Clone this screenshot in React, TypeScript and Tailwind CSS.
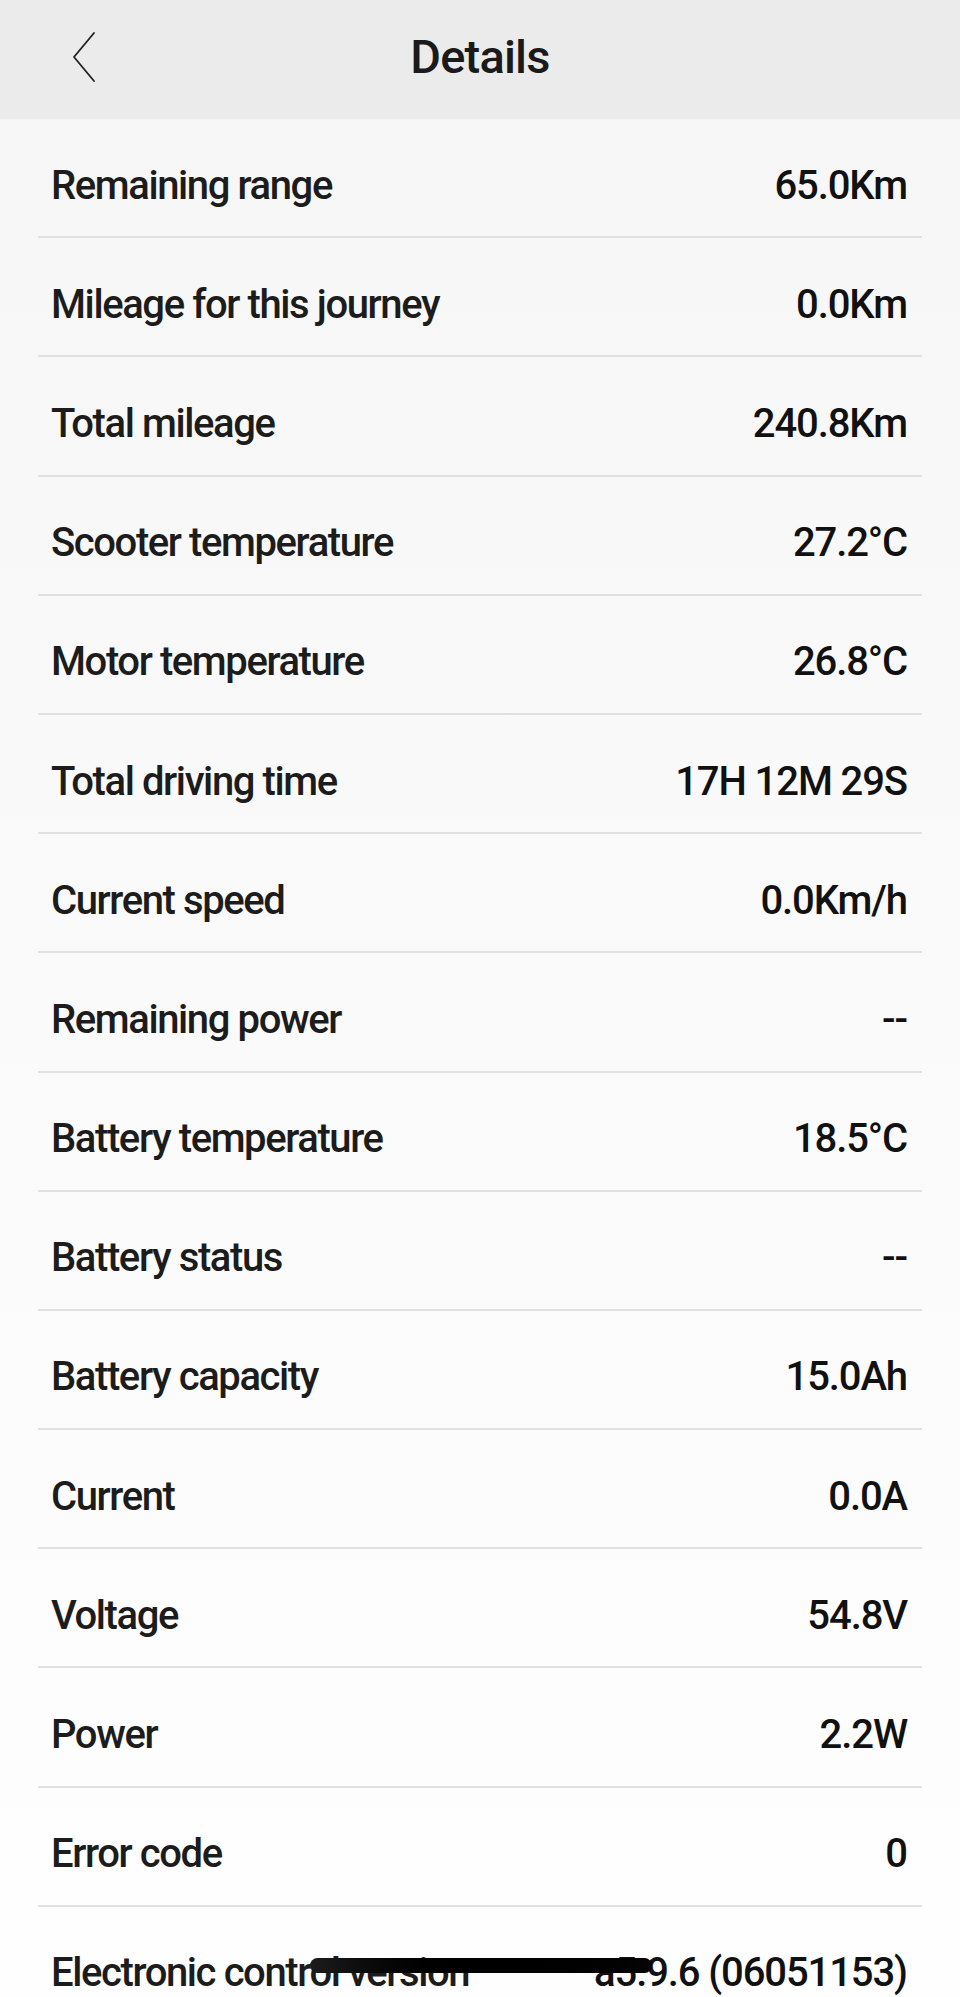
import React from 'react';

type Stat = { label: string; value: string };

const stats: Stat[] = [
  { label: 'Remaining range', value: '65.0Km' },
  { label: 'Mileage for this journey', value: '0.0Km' },
  { label: 'Total mileage', value: '240.8Km' },
  { label: 'Scooter temperature', value: '27.2°C' },
  { label: 'Motor temperature', value: '26.8°C' },
  { label: 'Total driving time', value: '17H 12M 29S' },
  { label: 'Current speed', value: '0.0Km/h' },
  { label: 'Remaining power', value: '--' },
  { label: 'Battery temperature', value: '18.5°C' },
  { label: 'Battery status', value: '--' },
  { label: 'Battery capacity', value: '15.0Ah' },
  { label: 'Current', value: '0.0A' },
  { label: 'Voltage', value: '54.8V' },
  { label: 'Power', value: '2.2W' },
  { label: 'Error code', value: '0' },
  { label: 'Electronic control version', value: 'a5.9.6 (06051153)' },
];

function BackChevron() {
  return (
    <svg width="24" height="52" viewBox="0 0 24 52" fill="none">
      <polyline points="22,2 2,26 22,50" stroke="#1f1f1f" strokeWidth="1.8" strokeLinecap="round" strokeLinejoin="round" />
    </svg>
  );
}

function StatRow({ label, value }: Stat) {
  return (
    <div className="h-[119.2px] mx-[38px] border-b-2 border-[#e1e1e1] flex items-center justify-between pt-[16px] pl-[13px] pr-[15px]">
      <span className="text-[40px] leading-[40px] font-medium tracking-[-1.4px] text-[#1c1c1c] whitespace-nowrap">{label}</span>
      <span className="text-[40px] leading-[40px] font-medium tracking-[-1.1px] text-[#111111] whitespace-nowrap">{value}</span>
    </div>
  );
}

export default function App() {
  return (
    <div className="relative w-[960px] h-[1997px] overflow-hidden bg-gradient-to-b from-[#f6f6f6] to-[#fefefe] font-['Roboto','Liberation_Sans',Arial,sans-serif]">
      {/* 顶部导航 */}
      <header className="h-[119px] bg-[#ebebeb] grid grid-cols-[1fr_auto_1fr] items-center">
        <div className="pl-[72px] pb-[6px] flex items-center">
          <BackChevron />
        </div>
        <h1 className="text-[47px] leading-[47px] font-medium tracking-[-0.8px] text-[#1a1a1a] pb-[6px]">Details</h1>
        <div />
      </header>

      <div className="flex flex-col">
        {stats.map((s) => (
          <StatRow key={s.label} label={s.label} value={s.value} />
        ))}
      </div>

      {/* home indicator */}
      <div className="absolute left-[310px] top-[1958px] w-[342px] h-[15px] rounded-full bg-gradient-to-r from-[#1c1c1c] via-black to-[#050505]" />
    </div>
  );
}
